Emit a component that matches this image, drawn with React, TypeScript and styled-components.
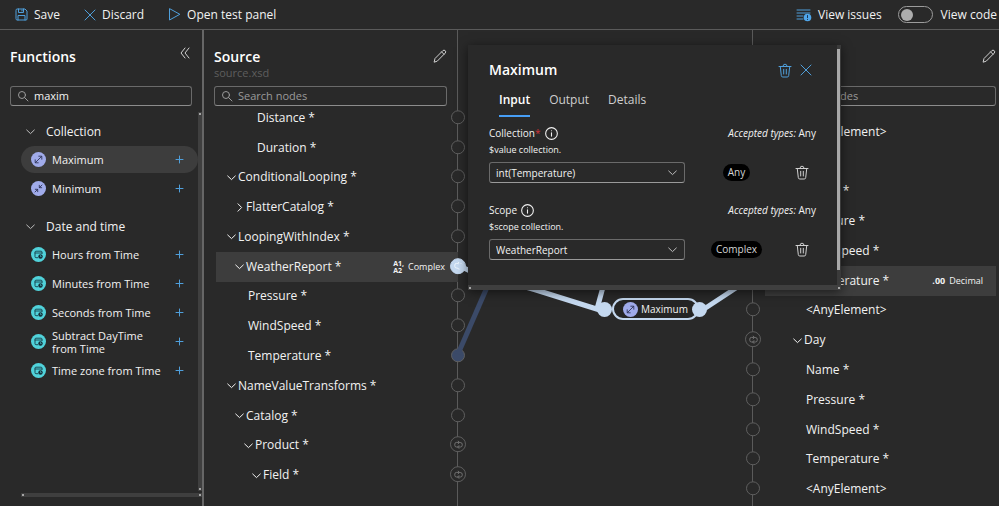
import React, { useState } from 'react';
import styled, { createGlobalStyle, css } from 'styled-components';

const color = {
  bg: '#292929',
  raised: '#3d3d3d',
  line: '#5a5a5a',
  text: '#f2f2f2',
  muted: '#9a9a9a',
  blue: '#4f9fdb',
  link: '#c4d8ef',
  linkDim: '#3b4a68',
};

const GlobalStyle = createGlobalStyle`
  * { box-sizing: border-box; }
  body { margin: 0; background: ${color.bg}; overflow: hidden; }
  body, button, input, select {
    font-family: "Open Sans", "Noto Sans", sans-serif;
    font-size: 12px;
    color: ${color.text};
  }
  h2, h3, p { margin: 0; }
`;

/* ---------- icons ---------- */

const Stroke = styled.svg`
  flex: none;
  display: block;
  fill: none;
  stroke: currentColor;
  stroke-linecap: round;
  stroke-linejoin: round;
`;

const SaveIcon = () => (
  <Stroke width="13" height="13" viewBox="0 0 13 13">
    <path d="M1 2a1 1 0 0 1 1-1h8l2 2v8a1 1 0 0 1-1 1H2a1 1 0 0 1-1-1zM3.5 1v3.5h5V1M3 12V7.5h7V12M7 2v1" />
  </Stroke>
);
const CloseIcon = ({ size = 12 }: { size?: number }) => (
  <Stroke width={size} height={size} viewBox="0 0 12 12">
    <path d="M1 1l10 10M11 1L1 11" />
  </Stroke>
);
const PlayIcon = () => (
  <Stroke width="13" height="13" viewBox="0 0 13 13">
    <path d="M1.5 1v11l10-5.5z" />
  </Stroke>
);
const IssuesIcon = () => (
  <Stroke width="16" height="14" viewBox="0 0 16 14">
    <path d="M1 2h13M1 5h13M1 8h6M1 11h6" />
    <circle cx="11.5" cy="9.5" r="3.8" fill="#4fa6ea" stroke="none" />
    <path d="M11.5 7.5v2.2M11.5 11.4v.1" stroke="#1d3550" />
  </Stroke>
);
const CollapseIcon = () => (
  <Stroke width="10" height="12" viewBox="0 0 10 12">
    <path d="M5 1L1 6l4 5M9 1L5 6l4 5" />
  </Stroke>
);
const SearchIcon = () => (
  <Stroke width="12" height="12" viewBox="0 0 12 12">
    <circle cx="5" cy="5" r="3.5" />
    <path d="M7.6 7.6L11 11" />
  </Stroke>
);
const Chevron = ({ right = false }: { right?: boolean }) => (
  <Stroke width="9" height="9" viewBox="0 0 9 9">
    <path d={right ? 'M3 .8l3.6 3.7L3 8.2' : 'M.7 3l3.8 3.6L8.3 3'} />
  </Stroke>
);
const PlusIcon = () => (
  <Stroke width="9" height="9" viewBox="0 0 9 9">
    <path d="M4.5 1v7M1 4.5h7" />
  </Stroke>
);
const PencilIcon = () => (
  <Stroke width="14" height="14" viewBox="0 0 14 14">
    <path d="M1.2 12.8l.8-3.3 7.8-7.8a1.6 1.6 0 0 1 2.4 2.4L4.5 11.9zM8.6 2.9l2.4 2.4" />
  </Stroke>
);
const TrashIcon = () => (
  <Stroke width="14" height="15" viewBox="0 0 14 15">
    <path d="M1 3.5h12M5 3.2a2 2 0 0 1 4 0M2.3 3.8l1 8.8a1.5 1.5 0 0 0 1.5 1.4h4.4a1.5 1.5 0 0 0 1.5-1.4l1-8.8M5.7 6.3v4.7M8.3 6.3v4.7" />
  </Stroke>
);
const InfoIcon = () => (
  <Stroke width="13" height="13" viewBox="0 0 12 12">
    <circle cx="6" cy="6" r="5.4" />
    <path d="M6 5.4v3M6 3.4v.1" />
  </Stroke>
);
const RepeatIcon = () => (
  <Stroke width="9" height="9" viewBox="0 0 9 9" strokeWidth=".9">
    <path d="M2.8 6.8H2.500A1.700 1.700 0 0 1 .8 5.100V3.900A1.700 1.700 0 0 1 2.500 2.200H5.200M4.100 .8l1.400 1.400L4.100 3.600M6.500 2.300A1.700 1.700 0 0 1 8.200 3.900v1.200A1.700 1.700 0 0 1 6.500 6.800H3.800M4.900 5.400L3.500 6.800l1.400 1.400" />
  </Stroke>
);
const FunctionGlyph = ({ kind }: { kind: 'max' | 'min' | 'time' }) => (
  <Stroke width="15" height="15" viewBox="0 0 15 15">
    <circle cx="7.5" cy="7.5" r="7.5" fill={kind === 'time' ? '#50d2da' : '#a0abea'} stroke="none" />
    {kind === 'max' && (
      <path stroke="#2e3358" strokeWidth=".9" d="M4.500 10.500l6-6M7.800 4.200h3v3M7.200 10.800h-3v-3" />
    )}
    {kind === 'min' && (
      <path stroke="#2e3358" strokeWidth=".9" d="M11 4L8.400 6.600M8.300 4.300v2.400h2.400M4 11l2.600-2.600M4.300 8.300h2.400v2.400" />
    )}
    {kind === 'time' && (
      <>
        <path stroke="#173f4a" strokeWidth=".9" d="M6.800 10.700H5a1 1 0 0 1-1-1V5.200a1 1 0 0 1 1-1h5a1 1 0 0 1 1 1v1.300M4 6h7" />
        <circle cx="9.500" cy="9.500" r="2.200" fill="#15303a" stroke="none" />
        <path stroke="#50d2da" strokeWidth=".6" d="M9.500 8.500v1.100h.8" />
      </>
    )}
  </Stroke>
);

/* ---------- shared controls ---------- */

const IconButton = styled.button<{ $accent?: boolean }>`
  display: flex;
  align-items: center;
  justify-content: center;
  padding: 0;
  border: 0;
  background: none;
  cursor: pointer;
  color: ${(p) => (p.$accent ? color.blue : '#d0d0d0')};
`;

const SearchField = styled.label`
  display: flex;
  align-items: center;
  gap: 5px;
  height: 20px;
  padding: 0 6px;
  border: 1px solid #6a6a6a;
  border-bottom-color: #8c8c8c;
  border-radius: 3px;
  color: ${color.muted};
`;
const SearchInput = styled.input`
  flex: 1;
  min-width: 0;
  padding: 0;
  border: 0;
  outline: 0;
  background: none;
  font-size: 11px;
  line-height: 16px;
  &::placeholder { color: ${color.muted}; opacity: 1; }
`;

/* ---------- page frame ---------- */

const Page = styled.div`
  display: flex;
  flex-direction: column;
  height: 100vh;
  background: ${color.bg};
`;
const Toolbar = styled.header`
  display: flex;
  align-items: center;
  justify-content: space-between;
  flex: none;
  height: 30px;
  padding: 0 2px 0 15px;
  border-bottom: 1px solid ${color.line};
`;
const ToolGroup = styled.div<{ $gap: number }>`
  display: flex;
  align-items: center;
  gap: ${(p) => p.$gap}px;
`;
const ToolButton = styled.button`
  display: flex;
  align-items: center;
  gap: 6px;
  padding: 0;
  border: 0;
  background: none;
  font-weight: 500;
  line-height: 16px;
  white-space: nowrap;
  cursor: pointer;
  svg { color: ${color.blue}; }
`;
const SwitchLabel = styled.label`
  display: flex;
  align-items: center;
  gap: 8px;
  font-weight: 500;
  white-space: nowrap;
`;
const Switch = styled.input`
  appearance: none;
  display: flex;
  align-items: center;
  width: 35px;
  height: 17px;
  margin: 0;
  padding: 0 2px;
  border: 1px solid #9c9c9c;
  border-radius: 9px;
  &::before {
    content: '';
    width: 12px;
    height: 12px;
    border-radius: 50%;
    background: #adadad;
  }
  &:checked { justify-content: flex-end; }
`;
const Workspace = styled.main`
  display: grid;
  grid-template-columns: 204px 254px minmax(0, 1fr) 247px;
  flex: 1;
  min-height: 0;
`;

/* ---------- functions panel ---------- */

const FunctionsPanel = styled.aside`
  display: flex;
  flex-direction: column;
  min-height: 0;
  border-right: 2px solid #666;
`;
const PanelHead = styled.div`
  display: flex;
  justify-content: space-between;
  height: 56px;
  padding: 17px 12px 0 10px;
`;
const PanelTitle = styled.h2`
  font-size: 14px;
  font-weight: 600;
  line-height: 20px;
  color: #fff;
`;
const HeadAction = styled(IconButton)`
  height: 12px;
`;
const FunctionsSearch = styled(SearchField)`
  margin: 0 10px;
`;
const FunctionsScroll = styled.div`
  display: grid;
  grid-template: minmax(0, 1fr) 4px / minmax(0, 1fr) 4px;
  row-gap: 2px;
  flex: 1;
  min-height: 0;
  margin: 6px 0 9px 21px;
`;
const ScrollTrack = styled.div<{ $wide?: boolean }>`
  display: flex;
  flex-direction: ${(p) => (p.$wide ? 'row' : 'column')};
  justify-content: space-between;
  align-items: center;
  ${(p) => p.$wide && css`grid-column: 1 / -1;`}
  padding: 1px;
  background: #3f3f3f;
  &::before, &::after {
    content: '';
    width: 2px;
    height: 2px;
    background: #a5a5a5;
  }
`;
const FunctionGroups = styled.div`
  overflow: hidden;
`;
const GroupTitle = styled.button`
  display: flex;
  align-items: center;
  gap: 11px;
  width: 100%;
  height: 34px;
  padding: 4px 5px 0;
  border: 0;
  background: none;
  font-weight: 500;
  svg { color: #bdbdbd; }
`;
const FunctionList = styled.ul`
  margin: 0 0 5px;
  padding: 0;
  list-style: none;
`;
const FunctionItem = styled.li<{ $active?: boolean }>`
  display: flex;
  align-items: center;
  gap: 6px;
  height: 27px;
  margin-bottom: 2px;
  padding: 0 14px 0 10px;
  border-radius: 14px;
  background: ${(p) => (p.$active ? color.raised : 'transparent')};
`;
const FunctionName = styled.span`
  flex: 1;
  font-size: 11px;
  line-height: 13px;
`;

type Fn = { name: React.ReactNode; key: string; kind: 'max' | 'min' | 'time' };
const groups: { title: string; items: Fn[] }[] = [
  {
    title: 'Collection',
    items: [
      { key: 'Maximum', name: 'Maximum', kind: 'max' },
      { key: 'Minimum', name: 'Minimum', kind: 'min' },
    ],
  },
  {
    title: 'Date and time',
    items: [
      { key: 'Hours', name: 'Hours from Time', kind: 'time' },
      { key: 'Minutes', name: 'Minutes from Time', kind: 'time' },
      { key: 'Seconds', name: 'Seconds from Time', kind: 'time' },
      { key: 'Subtract', name: <>Subtract DayTime<br />from Time</>, kind: 'time' },
      { key: 'Zone', name: 'Time zone from Time', kind: 'time' },
    ],
  },
];

/* ---------- schema trees ---------- */

const SourcePanel = styled.section`
  display: flex;
  flex-direction: column;
  min-height: 0;
  border-right: 1px solid ${color.line};
`;
const TargetPanel = styled.section`
  display: flex;
  flex-direction: column;
  min-height: 0;
  border-left: 1px solid ${color.line};
`;
const SchemaHead = styled.div<{ $target?: boolean }>`
  display: flex;
  justify-content: space-between;
  align-items: flex-start;
  height: 56px;
  padding: ${(p) => (p.$target ? '17px 3px 0 12px' : '17px 10px 0 10px')};
`;
const SchemaFile = styled.p`
  font-size: 11px;
  line-height: 12px;
  color: #5e5e5e;
`;
const EditAction = styled(IconButton)`
  height: 18px;
`;
const SchemaSearch = styled(SearchField)<{ $target?: boolean }>`
  flex: none;
  margin: ${(p) => (p.$target ? '0 3px 0 12px' : '0 10px')};
`;
const TreeClip = styled.div<{ $target?: boolean }>`
  display: flex;
  flex: 1;
  min-height: 0;
  overflow: hidden;
  position: relative;
  ${(p) =>
    p.$target
      ? css`margin: 6px 0 0 -13px; padding: 5px 3px 2px 25px;`
      : css`margin: 4px -13px 0 0; padding: 0 12px 16px 12px;`}
`;
const Tree = styled.ul<{ $scrolled?: boolean }>`
  display: flex;
  flex-direction: column;
  flex: 1;
  margin: ${(p) => (p.$scrolled ? '-7px 0 0' : '0')};
  padding: 0;
  list-style: none;
`;
const TreeRow = styled.li<{ $indent: number; $active?: boolean }>`
  position: relative;
  display: flex;
  align-items: center;
  gap: 2px;
  flex: 1;
  min-height: 24px;
  padding-left: ${(p) => p.$indent}px;
  white-space: nowrap;
  background: ${(p) => (p.$active ? color.raised : 'transparent')};
`;
const NodeLabel = styled.span`
  line-height: 16px;
`;
const TypeTag = styled.span<{ $end: number }>`
  display: flex;
  align-items: center;
  gap: 4px;
  margin-left: auto;
  padding-right: ${(p) => p.$end}px;
  font-size: 9px;
  line-height: 12px;
`;
const DecimalMark = styled.b`
  font-size: 9px;
`;
const ComplexMark = styled.b`
  display: grid;
  font-size: 7px;
  line-height: 7px;
`;
const Port = styled.button<{ $side: 'left' | 'right'; $tone?: 'bright' | 'dim'; $loop?: boolean }>`
  position: absolute;
  top: 50%;
  ${(p) => (p.$side === 'right' ? 'right: 0;' : 'left: -12px;')}
  display: flex;
  align-items: center;
  justify-content: center;
  width: ${(p) => (p.$loop ? 16 : 14)}px;
  height: ${(p) => (p.$loop ? 16 : 14)}px;
  padding: 0;
  border: 1px solid ${(p) => (p.$tone === 'bright' ? color.link : '#5f5f5f')};
  border-radius: 50%;
  background: ${(p) => (p.$tone === 'bright' ? color.link : p.$tone === 'dim' ? color.linkDim : color.bg)};
  color: ${(p) => (p.$tone === 'bright' ? '#f4f9ff' : '#7a7a7a')};
  transform: translate(${(p) => (p.$side === 'right' ? '50%' : '-50%')}, -55%);
`;

type NodeData = {
  label: string;
  indent: number;
  chevron?: 'down' | 'right';
  type?: 'complex' | 'decimal';
  loop?: boolean;
  tone?: 'bright' | 'dim';
};
const sourceNodes: NodeData[] = [
  { label: 'Distance *', indent: 41 },
  { label: 'Duration *', indent: 41 },
  { label: 'ConditionalLooping *', indent: 11, chevron: 'down' },
  { label: 'FlatterCatalog *', indent: 19, chevron: 'right' },
  { label: 'LoopingWithIndex *', indent: 11, chevron: 'down' },
  { label: 'WeatherReport *', indent: 19, chevron: 'down', type: 'complex', loop: true, tone: 'bright' },
  { label: 'Pressure *', indent: 32 },
  { label: 'WindSpeed *', indent: 32 },
  { label: 'Temperature *', indent: 32, tone: 'dim' },
  { label: 'NameValueTransforms *', indent: 11, chevron: 'down' },
  { label: 'Catalog *', indent: 19, chevron: 'down' },
  { label: 'Product *', indent: 28, chevron: 'down', loop: true },
  { label: 'Field *', indent: 36, chevron: 'down', loop: true },
];
const targetNodes: NodeData[] = [
  { label: '<AnyElement>', indent: 41 },
  { label: 'Day', indent: 28, chevron: 'down', loop: true },
  { label: 'Name *', indent: 41 },
  { label: 'Pressure *', indent: 41 },
  { label: 'WindSpeed *', indent: 41 },
  { label: 'Temperature *', indent: 41, type: 'decimal', tone: 'bright' },
  { label: '<AnyElement>', indent: 41 },
  { label: 'Day', indent: 28, chevron: 'down', loop: true },
  { label: 'Name *', indent: 41 },
  { label: 'Pressure *', indent: 41 },
  { label: 'WindSpeed *', indent: 41 },
  { label: 'Temperature *', indent: 41 },
  { label: '<AnyElement>', indent: 41 },
];

const SchemaTree = ({ nodes, side }: { nodes: NodeData[]; side: 'left' | 'right' }) => (
  <TreeClip $target={side === 'left'}>
    <Tree $scrolled={side === 'right'}>
      {nodes.map((n, i) => (
        <TreeRow key={i} $indent={n.indent} $active={!!n.type}>
          {n.chevron && <Chevron right={n.chevron === 'right'} />}
          <NodeLabel>{n.label}</NodeLabel>
          {n.type === 'complex' && (
            <TypeTag $end={13}>
              <ComplexMark>
                <span>A1,</span>
                <span>A2</span>
              </ComplexMark>
              Complex
            </TypeTag>
          )}
          {n.type === 'decimal' && (
            <TypeTag $end={13}>
              <DecimalMark>.00</DecimalMark>
              Decimal
            </TypeTag>
          )}
          <Port $side={side} $tone={n.tone} $loop={n.loop} aria-label={`Connect ${n.label}`}>
            {n.loop && <RepeatIcon />}
          </Port>
        </TreeRow>
      ))}
    </Tree>
  </TreeClip>
);

/* ---------- mapping canvas ---------- */

const Canvas = styled.section`
  position: relative;
  min-width: 0;
`;
const Links = styled.svg`
  position: absolute;
  left: 0;
  top: 0;
  width: 100%;
  height: 100%;
  overflow: visible;
  pointer-events: none;
  fill: none;
  stroke-width: 5;
`;
const MapNode = styled.div`
  position: absolute;
  left: 154px;
  top: 268px;
  display: flex;
  align-items: center;
  gap: 3px;
  height: 22px;
  padding: 0 9px 0 9px;
  border: 2px solid ${color.link};
  border-radius: 11px;
  background: #252525;
  font-size: 10px;
  line-height: 16px;
`;
const NodePort = styled.span<{ $end?: boolean }>`
  position: absolute;
  top: 2px;
  ${(p) => (p.$end ? 'right: -10px;' : 'left: -17px;')}
  width: 15px;
  height: 15px;
  border-radius: 50%;
  background: ${color.link};
`;

/* ---------- function dialog ---------- */

const Dialog = styled.div`
  position: absolute;
  z-index: 2;
  left: 10px;
  top: 15px;
  display: grid;
  grid-template: auto 5px / minmax(0, 1fr) 4px;
  width: 373px;
  background: ${color.bg};
  box-shadow: 0 2px 10px rgba(0, 0, 0, 0.55);
`;
const DialogBody = styled.div`
  padding: 15px 21px 25px;
`;
const ThumbTrack = styled.div`
  padding: 4px 0 15px;
  background: #3a3a3a;
`;
const Thumb = styled.div`
  height: 100%;
  margin: 0 1px 0 0;
  background: #a8a8a8;
`;
const DialogHead = styled.div`
  display: flex;
  align-items: center;
  gap: 8px;
  height: 20px;
  padding-right: 4px;
`;
const DialogTitle = styled(PanelTitle)`
  flex: 1;
`;
const TabList = styled.div`
  display: flex;
  gap: 19px;
  margin: 9px 0 0 10px;
`;
const Tab = styled.button<{ $active?: boolean }>`
  height: 28px;
  padding: 2px 0 7px;
  border: 0;
  border-bottom: 2px solid ${(p) => (p.$active ? '#479ef5' : 'transparent')};
  background: none;
  font-weight: ${(p) => (p.$active ? 600 : 400)};
  line-height: 16px;
  color: ${(p) => (p.$active ? '#fff' : '#cfcfcf')};
`;
const Field = styled.div`
  margin-top: 8px;
  & + & { margin-top: 19px; }
`;
const FieldHead = styled.div`
  display: flex;
  align-items: center;
  height: 16px;
  font-size: 10px;
  line-height: 16px;
`;
const FieldLabel = styled.label`
  margin-right: 4px;
`;
const Required = styled.span`
  color: #d13438;
`;
const Accepted = styled.span`
  margin-left: auto;
`;
const FieldHint = styled.p`
  margin-top: 2px;
  font-size: 9px;
  line-height: 14px;
`;
const FieldRow = styled.div`
  display: grid;
  grid-template-columns: 196px 1fr 28px;
  align-items: center;
  margin-top: 5px;
`;
const SelectWrap = styled.div`
  display: grid;
  align-items: center;
  & > * { grid-area: 1 / 1; }
  & > svg { justify-self: end; margin-right: 8px; pointer-events: none; color: #bdbdbd; }
`;
const Select = styled.select`
  appearance: none;
  width: 100%;
  height: 21px;
  padding: 0 6px;
  border: 1px solid #6a6a6a;
  border-bottom-color: #9a9a9a;
  border-radius: 3px;
  background: none;
  font-size: 10px;
`;
const TypePill = styled.span`
  justify-self: center;
  padding: 0 5px;
  border-radius: 9px;
  background: #000;
  font-size: 10px;
  line-height: 17px;
  color: #d6d6d6;
`;

const Argument = (p: { id: string; label: string; required?: boolean; hint: string; value: string; type: string }) => (
  <Field>
    <FieldHead>
      <FieldLabel htmlFor={p.id}>
        {p.label}
        {p.required && <Required>*</Required>}
      </FieldLabel>
      <InfoIcon />
      <Accepted>
        <em>Accepted types:</em> Any
      </Accepted>
    </FieldHead>
    <FieldHint>{p.hint}</FieldHint>
    <FieldRow>
      <SelectWrap>
        <Select id={p.id} defaultValue={p.value}>
          <option>{p.value}</option>
        </Select>
        <Chevron />
      </SelectWrap>
      <TypePill>{p.type}</TypePill>
      <IconButton aria-label={`Remove ${p.label}`}>
        <TrashIcon />
      </IconButton>
    </FieldRow>
  </Field>
);

export default function App() {
  const [query, setQuery] = useState('maxim');
  return (
    <Page>
      <GlobalStyle />
      <Toolbar>
        <ToolGroup $gap={24}>
          <ToolButton><SaveIcon />Save</ToolButton>
          <ToolButton><CloseIcon />Discard</ToolButton>
          <ToolButton><PlayIcon />Open test panel</ToolButton>
        </ToolGroup>
        <ToolGroup $gap={16}>
          <ToolButton><IssuesIcon />View issues</ToolButton>
          <SwitchLabel>
            <Switch type="checkbox" role="switch" />
            View code
          </SwitchLabel>
        </ToolGroup>
      </Toolbar>
      <Workspace>
        <FunctionsPanel>
          <PanelHead>
            <PanelTitle>Functions</PanelTitle>
            <HeadAction aria-label="Collapse functions"><CollapseIcon /></HeadAction>
          </PanelHead>
          <FunctionsSearch>
            <SearchIcon />
            <SearchInput aria-label="Search functions" value={query} onChange={(e) => setQuery(e.target.value)} />
          </FunctionsSearch>
          <FunctionsScroll>
            <FunctionGroups>
              {groups.map((g) => (
                <React.Fragment key={g.title}>
                  <GroupTitle><Chevron />{g.title}</GroupTitle>
                  <FunctionList>
                    {g.items.map((f) => (
                      <FunctionItem key={f.key} $active={f.kind === 'max'}>
                        <FunctionGlyph kind={f.kind} />
                        <FunctionName>{f.name}</FunctionName>
                        <IconButton $accent aria-label={`Add ${f.key}`}><PlusIcon /></IconButton>
                      </FunctionItem>
                    ))}
                  </FunctionList>
                </React.Fragment>
              ))}
            </FunctionGroups>
            <ScrollTrack />
            <ScrollTrack $wide />
          </FunctionsScroll>
        </FunctionsPanel>

        <SourcePanel>
          <SchemaHead>
            <div>
              <PanelTitle>Source</PanelTitle>
              <SchemaFile>source.xsd</SchemaFile>
            </div>
            <EditAction aria-label="Edit source"><PencilIcon /></EditAction>
          </SchemaHead>
          <SchemaSearch>
            <SearchIcon />
            <SearchInput aria-label="Search source nodes" placeholder="Search nodes" />
          </SchemaSearch>
          <SchemaTree nodes={sourceNodes} side="right" />
        </SourcePanel>

        <Canvas>
          <Links>
            <path stroke={color.linkDim} d="M0 324L30 255" />
            <path stroke={color.link} d="M0 235L12 241M12 241L78 260L145 281M145 257L139 279M243 281L281 256" />
          </Links>
          <MapNode>
            <NodePort />
            <FunctionGlyph kind="max" />
            Maximum
            <NodePort $end />
          </MapNode>
          <Dialog role="dialog" aria-label="Maximum">
            <DialogBody>
              <DialogHead>
                <DialogTitle as="h3">Maximum</DialogTitle>
                <IconButton $accent aria-label="Delete function"><TrashIcon /></IconButton>
                <IconButton $accent aria-label="Close"><CloseIcon /></IconButton>
              </DialogHead>
              <TabList role="tablist">
                <Tab role="tab" aria-selected $active>Input</Tab>
                <Tab role="tab">Output</Tab>
                <Tab role="tab">Details</Tab>
              </TabList>
              <Argument id="collection" label="Collection" required hint="$value collection." value="int(Temperature)" type="Any" />
              <Argument id="scope" label="Scope" hint="$scope collection." value="WeatherReport" type="Complex" />
            </DialogBody>
            <ThumbTrack><Thumb /></ThumbTrack>
            <ScrollTrack $wide />
          </Dialog>
        </Canvas>

        <TargetPanel>
          <SchemaHead $target>
            <PanelTitle>Target</PanelTitle>
            <EditAction aria-label="Edit target"><PencilIcon /></EditAction>
          </SchemaHead>
          <SchemaSearch $target>
            <SearchIcon />
            <SearchInput aria-label="Search target nodes" placeholder="Search nodes" />
          </SchemaSearch>
          <SchemaTree nodes={targetNodes} side="left" />
        </TargetPanel>
      </Workspace>
    </Page>
  );
}
